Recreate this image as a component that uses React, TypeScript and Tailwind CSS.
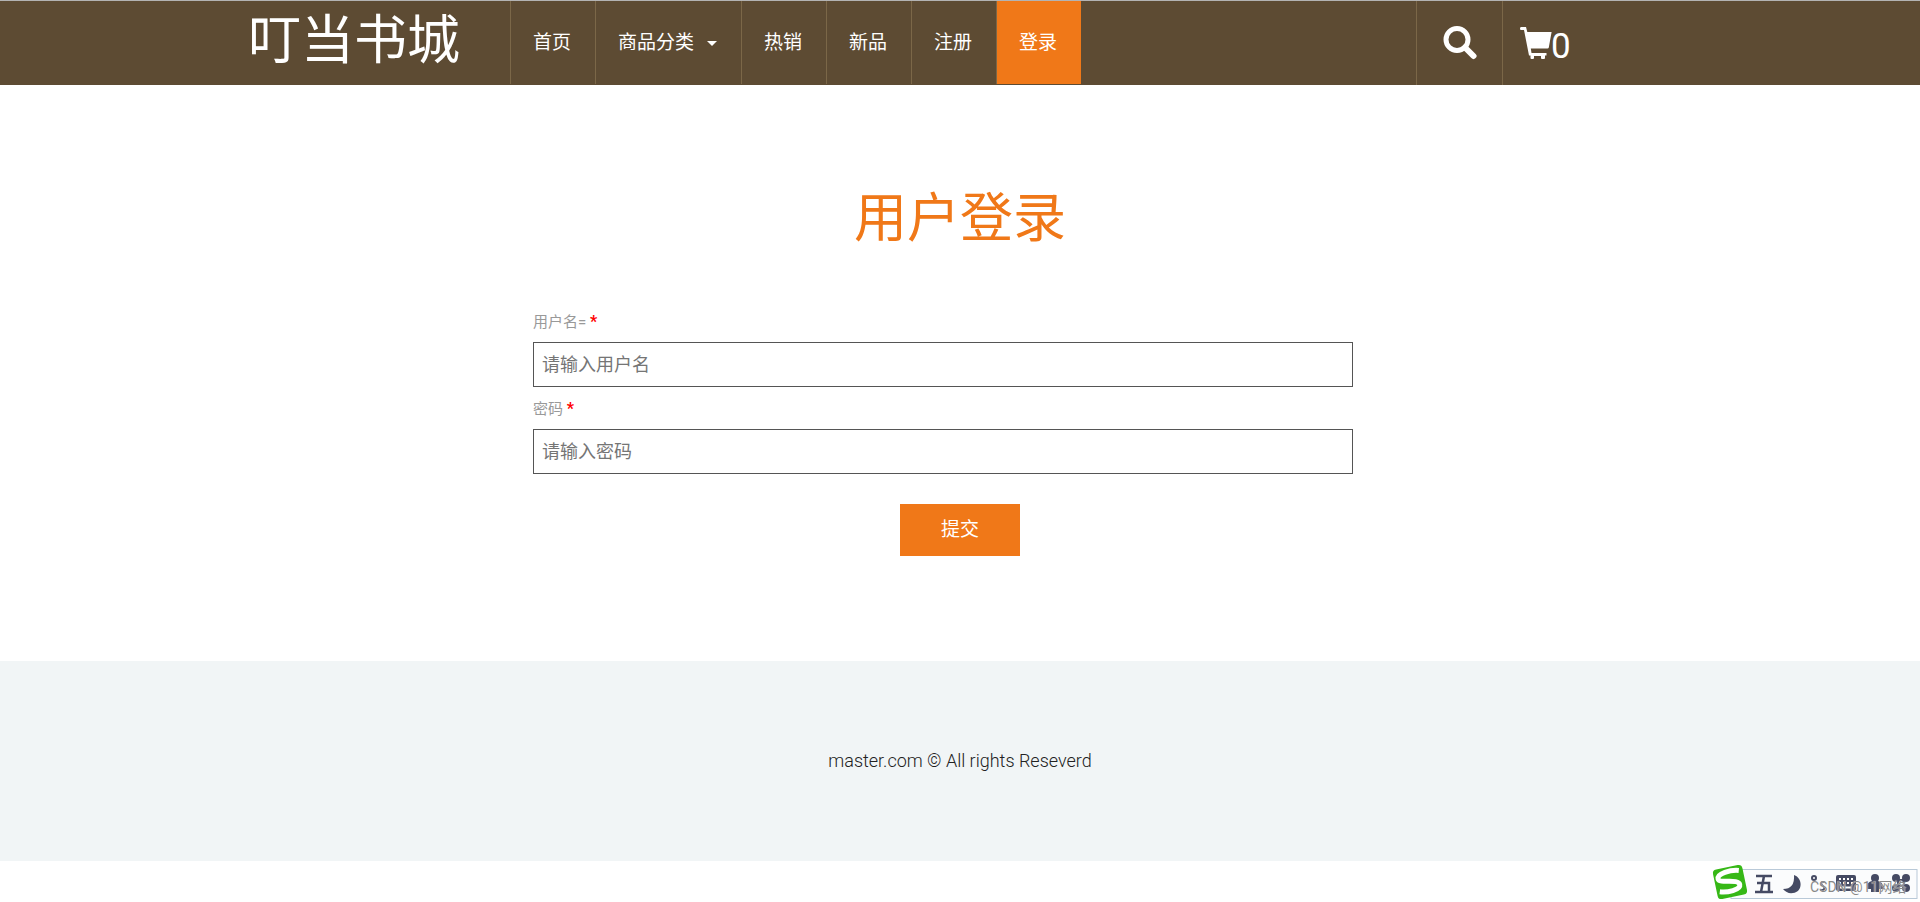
import type { ReactNode } from "react";

interface NavItemProps {
  children: ReactNode;
  active?: boolean;
}

const NavItem = ({ children, active = false }: NavItemProps) => {
  return (
    <li className="border-l border-[#7b6748]">
      <a
        href="#"
        className={`flex h-[83px] items-center pt-[2px] pr-6 pl-[22px] text-[19px] text-white ${
          active ? "bg-[#f07818]" : "hover:bg-[#f07818]"
        }`}
      >
        {children}
      </a>
    </li>
  );
};

interface FieldProps {
  id: string;
  label: string;
  type: string;
  placeholder: string;
}

const Field = ({ id, label, type, placeholder }: FieldProps) => {
  return (
    <div className="pt-[10px]">
      <label htmlFor={id} className="block text-[15px] leading-6 text-[#999]">
        {label} <span className="text-base leading-4 font-bold text-[#f00]">*</span>
      </label>
      <input
        id={id}
        type={type}
        placeholder={placeholder}
        className="mt-2 block h-[45px] w-[96%] border border-[#555] px-2 text-lg text-[#555] outline-none placeholder:text-[#757575]"
      />
    </div>
  );
};

const SearchIcon = () => (
  <svg viewBox="0 0 34 34" className="h-[34px] w-[34px]" fill="none" stroke="currentColor">
    <circle cx="14" cy="13.5" r="11" strokeWidth="5" />
    <path d="M22 21.5L30.5 30" strokeWidth="6" strokeLinecap="round" />
  </svg>
);

const CartIcon = () => (
  <svg viewBox="0 0 32 33" className="h-[33px] w-8" fill="currentColor">
    <path d="M1 0H6L7.3 5H31.6L28.8 20.5Q28.6 21.5 27.5 21.5H10.8L11.5 26H26.5V28.5H25V31Q25 32 24 32H22Q21 32 21 31V29H14V31Q14 32 13 32H11.5Q10.5 32 10.5 31V28.5H9L4 3H1Q0 3 0 1.5Q0 0 1 0Z" />
  </svg>
);

/* Barra flotante del teclado */
const InputBar = () => (
  <div className="fixed right-0 bottom-0 h-[38px] w-[209px]">
    <svg viewBox="0 0 209 38" className="h-full w-full">
      <rect x="20" y="5.5" width="186" height="29" fill="#fbfcfd" stroke="#b9c9d8" />
      <g transform="rotate(-12 19 18)">
        <rect x="4" y="3" width="30" height="30" rx="4" fill="#36b816" />
        <path
          d="M30 8.500C22 6 8 7 8 12.500C8 18 28 16 28 22.500C28 28 14 28 7 25.500"
          fill="none"
          stroke="#fff"
          strokeWidth="5"
        />
      </g>
      <path
        d="M45 12H61M46 19H58V28M53 12L50 28M44 28H62"
        fill="none"
        stroke="#454a63"
        strokeWidth="2.5"
      />
      <path d="M83 11C92 14 92 28 82 29Q76 30 72 25Q84 25 83 11Z" fill="#454a63" />
      <g fill="none" stroke="#454a63" strokeWidth="2">
        <circle cx="103" cy="14" r="2" />
        <path d="M114 18H111Q109 20 112 22Q115 24 112 26H109" />
      </g>
      <rect x="125" y="11" width="20" height="16" rx="2" fill="#454a63" />
      <path d="M128 15H142M128 19H142" stroke="#fff" strokeWidth="2" strokeDasharray="2 2" />
      <path d="M129 23.500H141" stroke="#fff" strokeWidth="2" />
      <g fill="#454a63">
        <circle cx="164" cy="14" r="4" />
        <path d="M161 17H167Q172 18 172 23V25H168V28H160V25H156V23Q156 18 161 17Z" />
        <circle cx="185" cy="14" r="4" />
        <circle cx="195" cy="14" r="4" />
        <circle cx="185" cy="24" r="4" />
        <circle cx="195" cy="24" r="4" />
        <rect x="186" y="15" width="8" height="8" />
      </g>
      <circle cx="190" cy="19" r="2" fill="#fff" />
    </svg>
    <span className="absolute top-[13px] left-[99px] text-sm leading-5 whitespace-nowrap text-[#888] text-shadow-[0_0_1px_#fff]">
      CSDN @11网络
    </span>
  </div>
);

const App = () => {
  return (
    <div className="font-[Roboto,'Noto_Sans_CJK_SC',sans-serif]">
      <header className="border-t border-[#b3b3b3] bg-[#5d4b33] px-[12.5%] text-white">
        <div className="flex h-[84px]">
          <h1 className="w-[270px] shrink-0 pl-2 text-[53px] leading-[80px]">
            <a href="#">叮当书城</a>
          </h1>
          <nav>
            <ul className="flex">
              <NavItem>首页</NavItem>
              <NavItem>
                商品分类
                <span className="ml-[13px] border-x-5 border-t-5 border-x-transparent border-t-white" />
              </NavItem>
              <NavItem>热销</NavItem>
              <NavItem>新品</NavItem>
              <NavItem>注册</NavItem>
              <NavItem active>登录</NavItem>
            </ul>
          </nav>
          <div className="mr-[91px] ml-auto flex">
            <button
              type="button"
              aria-label="搜索"
              className="flex w-[86px] items-center justify-center border-l border-[#7b6748]"
            >
              <SearchIcon />
            </button>
            <a
              href="#"
              aria-label="购物车"
              className="flex w-[87px] items-center border-l border-[#7b6748] pl-[17px] text-[35px]"
            >
              <CartIcon />
              <span className="-ml-px pt-2">0</span>
            </a>
          </div>
        </div>
      </header>

      <main className="px-4 pt-[94px] pb-[105px]">
        <h2 className="text-center text-[53px] leading-[80px] text-[#f07818]">
          用户登录
        </h2>
        <form className="mx-auto mt-[41px] max-w-[854px]">
          <Field id="username" label="用户名=" type="text" placeholder="请输入用户名" />
          <Field id="password" label="密码" type="password" placeholder="请输入密码" />
          <button
            type="submit"
            className="mx-auto mt-[30px] block h-[52px] w-[120px] bg-[#f07818] text-[19px] text-white"
          >
            提交
          </button>
        </form>
      </main>

      <footer className="bg-[#f1f5f6] py-[86px] text-center text-lg leading-7 font-light text-[#222]">
        master.com © All rights Reseverd
      </footer>

      <InputBar />
    </div>
  );
};

export default App;
